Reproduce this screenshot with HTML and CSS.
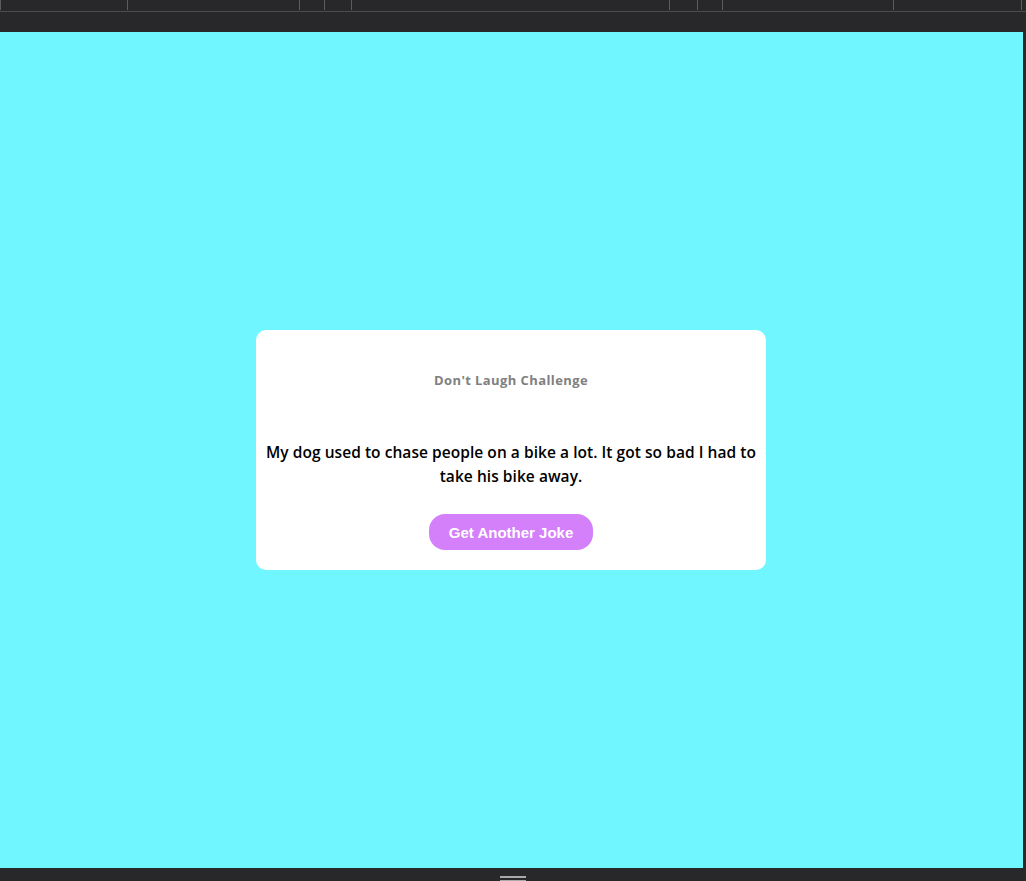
FILE: index.html
```html
<!DOCTYPE html>
<html lang="en">
<head>
<meta charset="utf-8">
<title>Don't Laugh Challenge</title>
<link rel="stylesheet" href="styles.css">
</head>
<body>
<div class="chrome-top">
  <div class="tabs">
    <span class="seg s0"></span>
    <span class="seg s1"></span>
    <span class="seg s2"></span>
    <span class="seg s3"></span>
    <span class="seg s4"></span>
    <span class="seg s5"></span>
    <span class="seg s6"></span>
    <span class="seg s7"></span>
    <span class="seg s8"></span>
    <span class="seg s9"></span>
  </div>
</div>
<div class="viewport">
  <main class="stage">
    <section class="card">
      <h3 class="title">Don't Laugh Challenge</h3>
      <p class="joke">My dog used to chase people on a bike a lot. It got so bad I had to take his bike away.</p>
      <button class="btn">Get Another Joke</button>
    </section>
  </main>
  <div class="edge"></div>
</div>
<div class="chrome-bottom">
  <div class="grip"><span></span><span></span></div>
</div>
</body>
</html>
```
FILE: styles.css
```css
html, body {
  margin: 0;
  padding: 0;
  height: 100%;
}
body {
  display: flex;
  flex-direction: column;
  background: #28282a;
  overflow: hidden;
}
.chrome-top {
  height: 32px;
  flex: none;
  background: #28282a;
}
.tabs {
  display: flex;
  height: 11px;
  border-bottom: 1px solid #4c4c4e;
}
.seg {
  height: 10px;
  border-right: 1px solid #5d5d5f;
  flex: none;
}
.s0 { width: 0; }
.s1 { width: 126px; }
.s2 { width: 171px; }
.s3 { width: 24px; }
.s4 { width: 26px; }
.s5 { width: 317px; }
.s6 { width: 27px; }
.s7 { width: 24px; }
.s8 { width: 170px; }
.s9 { width: 127px; }
.viewport {
  flex: 1;
  display: flex;
  min-height: 0;
}
.stage {
  flex: 1;
  background: #70f6ff;
  display: flex;
  align-items: center;
  justify-content: center;
}
.edge {
  width: 3px;
  background: #28282a;
}
.chrome-bottom {
  height: 13px;
  flex: none;
  display: flex;
  justify-content: center;
}
.grip {
  width: 26px;
  padding-top: 8px;
  display: flex;
  flex-direction: column;
  gap: 2px;
}
.grip span {
  display: block;
  height: 2px;
  background: #a9a9ab;
}
.card {
  width: 510px;
  height: 240px;
  margin-right: 1px;
  box-sizing: border-box;
  background: #ffffff;
  border-radius: 10px;
  padding: 40px 6px 20px;
  display: flex;
  flex-direction: column;
  align-items: center;
  text-align: center;
  font-family: "Open Sans", "Noto Sans", sans-serif;
}
.title {
  margin: 0;
  font-size: 13px;
  line-height: 20px;
  font-weight: 700;
  letter-spacing: 0.4px;
  color: #808080;
}
.joke {
  margin: 50px 0 0;
  font-size: 15.5px;
  line-height: 24px;
  font-weight: 600;
  letter-spacing: 0.05px;
  color: #000000;
}
.btn {
  margin-top: 26px;
  width: 164px;
  height: 36px;
  border: none;
  border-radius: 16px;
  background: #d580fb;
  color: #ffffff;
  font-family: "Liberation Sans", Arial, sans-serif;
  font-weight: 700;
  font-size: 15px;
  padding: 0;
  cursor: pointer;
}
```
